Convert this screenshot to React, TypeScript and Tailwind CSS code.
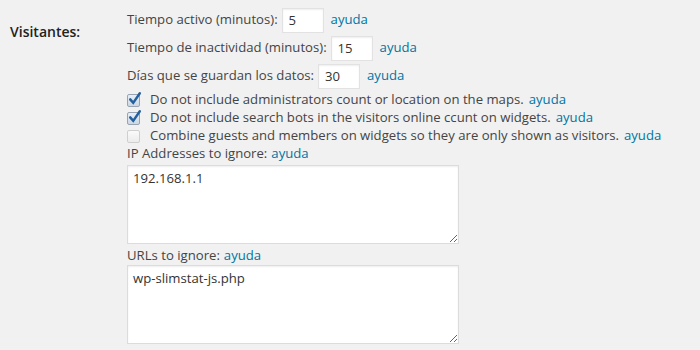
import { useState } from 'react';

const font = { fontFamily: '"Open Sans", "Liberation Sans", sans-serif' };

function Ayuda({ gap = 'ml-[7px]' }: { gap?: string }) {
  return <a href="#" className={`text-[#0074a2] ${gap}`}>ayuda</a>;
}

function NumberRow({ label, value }: { label: string; value: string }) {
  return (
    <div className="flex items-center h-[28px]">
      <span>{label}</span>
      <input
        type="text"
        defaultValue={value}
        className="ml-[4px] w-[42px] h-[25px] px-[6px] bg-white border border-[#e2e2e2] shadow-[inset_0_1px_2px_rgba(0,0,0,0.07)] outline-none text-[#333]"
      />
      <Ayuda />
    </div>
  );
}

function Check({ checked, label }: { checked: boolean; label: string }) {
  const [on, setOn] = useState(checked);
  return (
    <label className="flex items-center h-[18px]">
      <span
        onClick={() => setOn(!on)}
        className={`relative w-[13px] h-[13px] rounded-[2px] border mr-[10px] shrink-0 ${
          on
            ? 'border-[#98a4b2] bg-gradient-to-b from-[#e8eef5] to-[#cdd8e4]'
            : 'border-[#cfcfcf] bg-gradient-to-b from-[#fafafa] to-[#ececec]'
        }`}
      >
        {on && (
          <svg viewBox="0 0 16 16" className="absolute w-[14px] h-[15px] -top-[4px] left-[0px]">
            <path d="M2.5 9 L6 13 L13.5 2" fill="none" stroke="#245f9e" strokeWidth="2.8" strokeLinecap="round" />
          </svg>
        )}
      </span>
      <span>{label}</span>
      <Ayuda gap="ml-[5px]" />
    </label>
  );
}

function Area({ value }: { value: string }) {
  return (
    <textarea
      defaultValue={value}
      className="block w-[332px] h-[79px] bg-white border border-[#dcdcdc] shadow-[inset_0_1px_2px_rgba(0,0,0,0.07)] px-[5px] py-[3px] outline-none text-[#333]"
    />
  );
}

export default function App() {
  return (
    <div className="w-[700px] h-[350px] bg-[#f1f1f1] text-[#444] text-[13.15px] flex overflow-hidden" style={font}>
      <div className="w-[127px] pl-[10px] pt-[21px] font-semibold text-[#222] text-[14px]">Visitantes:</div>
      <div className="flex flex-col pt-[6px]">
        <NumberRow label="Tiempo activo (minutos):" value="5" />
        <NumberRow label="Tiempo de inactividad (minutos):" value="15" />
        <NumberRow label="Días que se guardan los datos:" value="30" />
        <div className="flex flex-col mt-[1px]">
          <Check checked label="Do not include administrators count or location on the maps." />
          <Check checked label="Do not include search bots in the visitors online ccunt on widgets." />
          <Check checked={false} label="Combine guests and members on widgets so they are only shown as visitors." />
        </div>
        <div className="h-[18px] flex items-center">
          <span>IP Addresses to ignore:</span>
          <a href="#" className="text-[#0074a2] ml-[4px]">ayuda</a>
        </div>
        <div className="mt-[2px]">
          <Area value="192.168.1.1" />
        </div>
        <div className="h-[20px] flex items-center mt-[2px]">
          <span>URLs to ignore:</span>
          <a href="#" className="text-[#0074a2] ml-[4px]">ayuda</a>
        </div>
        <div className="-mt-[1px]">
          <Area value="wp-slimstat-js.php" />
        </div>
      </div>
    </div>
  );
}
